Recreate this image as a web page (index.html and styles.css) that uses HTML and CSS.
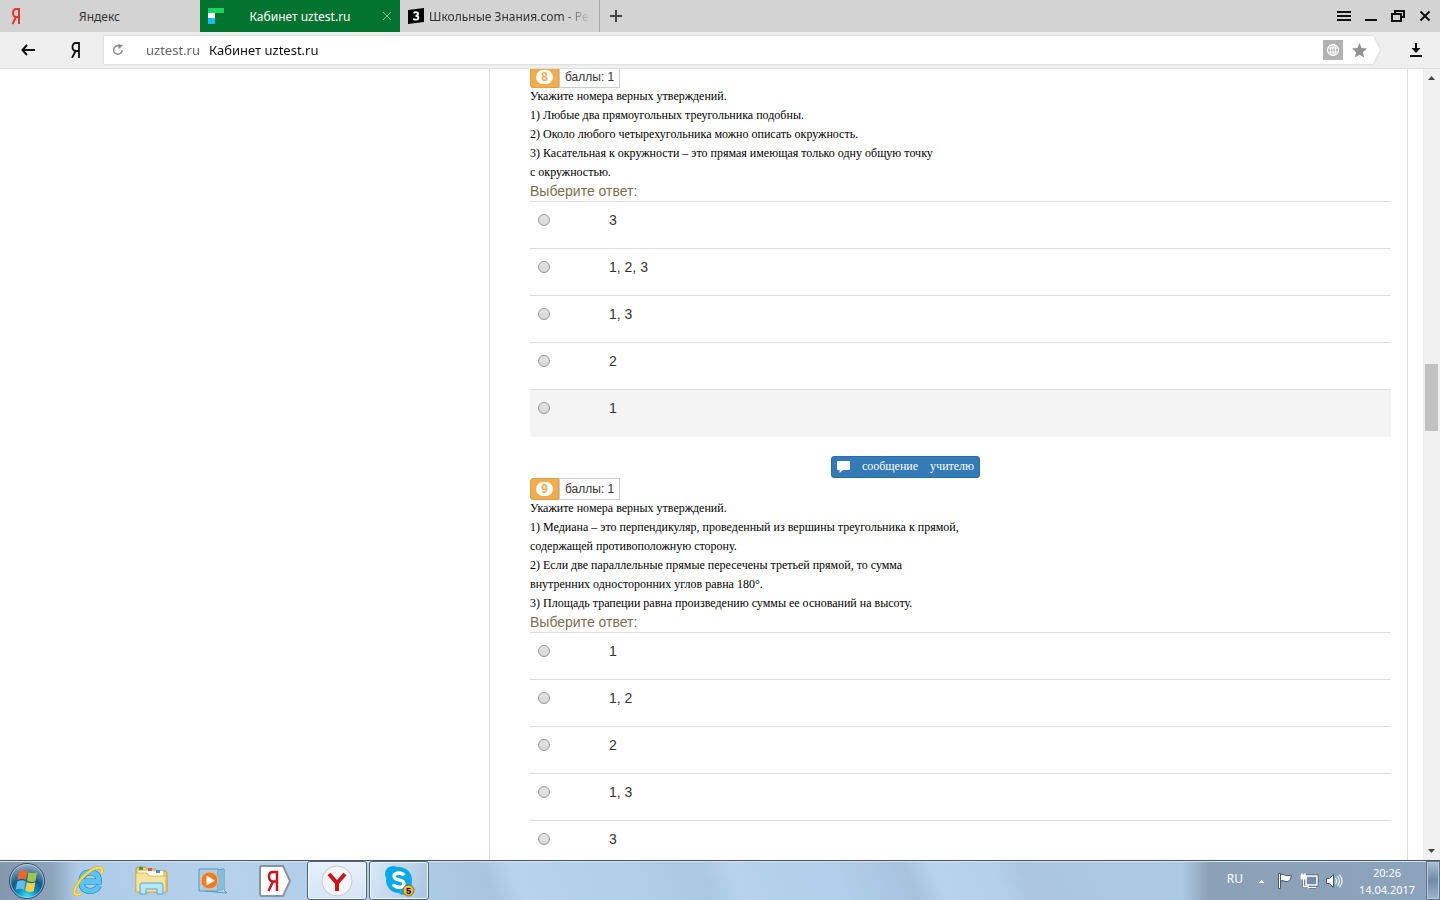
FILE: index.html
```
<!DOCTYPE html>
<html lang="ru">
<head>
    <meta charset="UTF-8">
    <meta name="viewport" content="width=device-width, initial-scale=1.0">
    <title>Кабинет uztest.ru</title>
    <link rel="stylesheet" href="styles.css">
</head>
<body>
    <header class="tabs">
        <button class="tab">
            <svg class="favicon" width="16" height="18" viewBox="0 0 16 18"><path d="M11 17V2H8.500Q5 2 5 6q0 4 3.500 4H11M8 10 4.500 17" fill="none" stroke="#e0392b" stroke-width="2"/></svg>
            <span class="tab-title">Яндекс</span>
        </button>
        <button class="tab active">
            <svg class="favicon" width="16" height="16" viewBox="0 0 16 16"><path d="M0 0h16v5H0z" fill="#19d463"/><path d="M0 5h7v5H0z" fill="#fff"/><path d="M0 10h7v6H0z" fill="#18bdf0"/></svg>
            <span class="tab-title">Кабинет uztest.ru</span>
            <svg class="tab-close" width="10" height="10" viewBox="0 0 10 10"><path d="M1 1l8 8M9 1l-8 8" stroke="#8dc0a0"/></svg>
        </button>
        <button class="tab long">
            <svg class="favicon" width="16" height="16" viewBox="0 0 16 16"><path d="M0 2 16 0v14L0 16z" fill="#000"/><path d="M5.500 5Q8 3.500 9.800 4.800 10.800 7.500 7.500 7.800 11.200 8 10.200 10.800 8.500 12.300 5.200 11.200" fill="none" stroke="#fff" stroke-width="1.800"/></svg>
            <span class="tab-title">Школьные Знания.com - Ре</span>
        </button>
        <button class="new-tab" aria-label="Новая вкладка">
            <svg width="12" height="12" viewBox="0 0 12 12"><path d="M6 0v12M0 6h12" stroke="#444" stroke-width="2"/></svg>
        </button>
        <div class="window-buttons">
            <button aria-label="Меню"><svg width="14" height="12" viewBox="0 0 14 12"><path d="M0 2h14M0 6h14M0 10h14" stroke="#111" stroke-width="2"/></svg></button>
            <button aria-label="Свернуть"><svg width="12" height="12" viewBox="0 0 12 12"><path d="M0 10h12" stroke="#111" stroke-width="2"/></svg></button>
            <button aria-label="Развернуть"><svg width="14" height="12" viewBox="0 0 14 12"><path d="M4 4V1h9v6h-3M1 4h9v7H1z" fill="none" stroke="#111" stroke-width="2"/></svg></button>
            <button aria-label="Закрыть"><svg width="12" height="12" viewBox="0 0 12 12"><path d="M1.500 1.500l9 9M10.500 1.500l-9 9" stroke="#111" stroke-width="2"/></svg></button>
        </div>
    </header>

    <nav class="toolbar">
        <button class="tool" aria-label="Назад"><svg width="14" height="12" viewBox="0 0 14 12"><path d="M14 6H2M6 1 1.500 6 6 11" fill="none" stroke="#111" stroke-width="2"/></svg></button>
        <button class="tool" aria-label="Яндекс"><svg width="10" height="16" viewBox="0 0 10 16"><path d="M8 9H5Q1.500 8.700 1.500 5 1.500 1 5 1h3v15M4.600 9 1 16" fill="none" stroke="#111" stroke-width="1.800"/></svg></button>
        <div class="address-shadow">
            <div class="address">
                <button class="reload" aria-label="Обновить"><svg width="12" height="12" viewBox="0 0 12 12"><path d="M10.200 6A4.300 4.300 0 1 1 6 1.700h2" fill="none" stroke="#888" stroke-width="1.400"/><path d="M6.500 0v5L11 1.500z" fill="#888"/></svg></button>
                <label class="domain" for="url">uztest.ru</label>
                <input class="url" id="url" type="text" value="Кабинет uztest.ru">
                <button aria-label="Перевести"><svg width="20" height="20" viewBox="0 0 20 20"><path d="M0 0h20v20H0z" fill="#b2b2b2"/><g fill="none" stroke="#fff" stroke-width="1.100"><circle cx="10" cy="10" r="5.500"/><ellipse cx="10" cy="10" rx="2.600" ry="5.500"/><path d="M5 8h10M5 12h10M10 4.500v11"/></g></svg></button>
                <button aria-label="В закладки"><svg width="15" height="15" viewBox="0 0 15 15"><path d="M7.500 0 9.600 5.100 15 5.600 10.900 9.200 12.200 14.600 7.500 11.700 2.800 14.600 4.100 9.200 0 5.600 5.400 5.100z" fill="#929292"/></svg></button>
            </div>
        </div>
        <button class="download" aria-label="Загрузки"><svg width="12" height="14" viewBox="0 0 12 14"><path d="M6 0v8M0 13h12" stroke="#111" stroke-width="2"/><path d="M1.500 5h9L6 10z" fill="#111"/></svg></button>
    </nav>

    <div class="viewport">
        <aside class="side"></aside>
        <main class="content">
            <section class="question">
                <div class="question-head"><span class="number"><b>8</b></span><span class="points">баллы: 1</span></div>
                <p class="question-text">
                    Укажите номера верных утверждений.<br>
                    1) Любые два прямоугольных треугольника подобны.<br>
                    2) Около любого четырехугольника можно описать окружность.<br>
                    3) Касательная к окружности – это прямая имеющая только одну общую точку<br>
                    с окружностью.
                </p>
                <div class="choose">Выберите ответ:</div>
                <table class="answers">
                    <tr><td><input type="radio" name="q8" id="q8a"></td><td><label for="q8a">3</label></td></tr>
                    <tr><td><input type="radio" name="q8" id="q8b"></td><td><label for="q8b">1, 2, 3</label></td></tr>
                    <tr><td><input type="radio" name="q8" id="q8c"></td><td><label for="q8c">1, 3</label></td></tr>
                    <tr><td><input type="radio" name="q8" id="q8d"></td><td><label for="q8d">2</label></td></tr>
                    <tr class="hovered"><td><input type="radio" name="q8" id="q8e"></td><td><label for="q8e">1</label></td></tr>
                </table>
                <div class="actions">
                    <button class="message">
                        <svg width="13" height="12" viewBox="0 0 13 12"><path d="M1 0h11q1 0 1 1v7q0 1-1 1H6l-3.500 3V9H1Q0 9 0 8V1q0-1 1-1z" fill="#fff"/></svg>
                        <span>сообщение</span><span>учителю</span>
                    </button>
                </div>
            </section>

            <section class="question">
                <div class="question-head"><span class="number"><b>9</b></span><span class="points">баллы: 1</span></div>
                <p class="question-text">
                    Укажите номера верных утверждений.<br>
                    1) Медиана – это перпендикуляр, проведенный из вершины треугольника к прямой,<br>
                    содержащей противоположную сторону.<br>
                    2) Если две параллельные прямые пересечены третьей прямой, то сумма<br>
                    внутренних односторонних углов равна 180°.<br>
                    3) Площадь трапеции равна произведению суммы ее оснований на высоту.
                </p>
                <div class="choose">Выберите ответ:</div>
                <table class="answers">
                    <tr><td><input type="radio" name="q9" id="q9a"></td><td><label for="q9a">1</label></td></tr>
                    <tr><td><input type="radio" name="q9" id="q9b"></td><td><label for="q9b">1, 2</label></td></tr>
                    <tr><td><input type="radio" name="q9" id="q9c"></td><td><label for="q9c">2</label></td></tr>
                    <tr><td><input type="radio" name="q9" id="q9d"></td><td><label for="q9d">1, 3</label></td></tr>
                    <tr><td><input type="radio" name="q9" id="q9e"></td><td><label for="q9e">3</label></td></tr>
                </table>
            </section>
        </main>
        <div class="scrollbar">
            <svg width="7" height="4" viewBox="0 0 7 4"><path d="M0 4 3.500 0 7 4z" fill="#444"/></svg>
            <div class="track"><div class="thumb"></div></div>
            <svg width="7" height="4" viewBox="0 0 7 4"><path d="M0 0 3.500 4 7 0z" fill="#444"/></svg>
        </div>
    </div>

    <footer class="taskbar">
        <button class="start" aria-label="Пуск">
            <svg width="38" height="38" viewBox="0 0 38 38">
                <defs>
                    <radialGradient id="orb" cx=".5" cy=".95" r=".95"><stop offset="0" stop-color="#3fe0f5"/><stop offset=".3" stop-color="#0c8fc0"/><stop offset=".55" stop-color="#175a86"/><stop offset="1" stop-color="#9db4c6"/></radialGradient>
                </defs>
                <circle cx="19" cy="19" r="17.500" fill="url(#orb)" stroke="#2f5068"/>
                <circle cx="19" cy="19" r="16.500" fill="none" stroke="#c4dbe8" stroke-opacity=".6"/>
                <path d="M11 9.500q4-2.500 8.500 0L18 18q-4-2.500-8.500 0z" fill="#ef642c"/>
                <path d="M20.500 10.200q4 2.300 8.500 0L27.500 19q-4.500 2.200-8.500-.5z" fill="#9bc84c"/>
                <path d="M9.200 19.500q4.500-2.500 8.500 0L16.200 28q-4-2.300-8.500 0z" fill="#65bce9"/>
                <path d="M18.800 20q4 2.500 8.500.3L25.800 29q-4.500 2-8.500-.5z" fill="#fbcf48"/>
            </svg>
        </button>
        <button class="app" aria-label="Internet Explorer">
            <svg width="34" height="34" viewBox="0 0 34 34"><path d="M27 21.500Q24.500 27 18 27 9.500 26.500 9.500 18 9.500 8.500 18 8.500q9 0 9 9H12" fill="none" stroke="#247fb9" stroke-width="6"/><path d="M27 21.500Q24.500 27 18 27 9.500 26.500 9.500 18 9.500 8.500 18 8.500q9 0 9 9H12" fill="none" stroke="#5bc4ef" stroke-width="4.800"/><path d="M29 10Q32 4 27.500 3.500 20 3.500 10 14-1 28 4 30.500q2 .8 5-1" fill="none" stroke="#d7a51b" stroke-width="3"/><path d="M29 10Q32 4 27.500 3.500 20 3.500 10 14-1 28 4 30.500q2 .8 5-1" fill="none" stroke="#f9df5a" stroke-width="2"/></svg>
        </button>
        <button class="app" aria-label="Проводник">
            <svg width="34" height="32" viewBox="0 0 34 32"><path d="M2 4q0-2 2-2h7l2 2h8l2 2h8q2 0 2 2v19H2z" fill="#e9cd72" stroke="#c39c3c"/><path d="M4 6h25v5H4z" fill="#fff"/><path d="M5 2h4v3H5z" fill="#3d9b4b"/><path d="M14 3h4v3h-4z" fill="#cf5c3d"/><path d="M22 5h4v3h-4z" fill="#4594c9"/><path d="M2 8h11l2 3h17v16H2z" fill="#f6e49c" stroke="#d8b75a"/><path d="M6 29V20q0-2 2-2h19q2 0 2 2v9h-6v-5H12v5z" fill="#b9e3f6" stroke="#57a8ce"/></svg>
        </button>
        <button class="app" aria-label="Проигрыватель">
            <svg width="30" height="28" viewBox="0 0 30 28"><path d="M7 4 26 2v21l3 3-22-2" fill="#c3e0ef" stroke="#5299bb"/><path d="M22 3v21M24 3v21" stroke="#5299bb"/><path d="M1 2h19v22H1z" fill="#a9cfe6" stroke="#5299bb"/><circle cx="11.500" cy="13.500" r="8.500" fill="#ef7b27" stroke="#f8bb83"/><path d="M8.500 8.500v10l8.500-5z" fill="#fff"/></svg>
        </button>
        <button class="app" aria-label="Яндекс">
            <svg width="32" height="32" viewBox="0 0 32 32"><path d="M3 1h21l7 15-7 15H3q-2 0-2-2V3q0-2 2-2z" fill="#fff" stroke="#8793a0" stroke-width="2"/><path d="M17 16.500h-3q-4-.5-4-5 0-4.500 4-4.500h4v19M14 16.500 9.500 26" fill="none" stroke="#c8141b" stroke-width="2.500"/></svg>
        </button>
        <button class="app opened" aria-label="Яндекс.Браузер">
            <svg width="32" height="32" viewBox="0 0 32 32"><circle cx="16" cy="16" r="15" fill="#f5f5f6" stroke="#c7cbd1"/><path d="M8 9l8 9 8-9M16 17v9" fill="none" stroke="#c9171e" stroke-width="4"/></svg>
        </button>
        <button class="app opened dim" aria-label="Skype">
            <svg width="32" height="32" viewBox="0 0 32 32"><circle cx="10" cy="9" r="8" fill="#08a9e5"/><circle cx="16" cy="15" r="13" fill="#08a9e5"/><circle cx="21" cy="22" r="8" fill="#08a9e5"/><path d="M21 10.500Q19.500 8 15.500 8 11 8.300 11 11.200q0 2.600 5 3.700 5 1.100 5 4 0 3.200-5 3.300-4.500 0-5.500-3" fill="none" stroke="#fff" stroke-width="3.400"/><circle cx="25.500" cy="25.500" r="5.500" fill="#f5b836" stroke="#7f6a38"/><text x="25.500" y="29" text-anchor="middle" class="counter">5</text></svg>
        </button>
        <div class="tray">
            <span class="lang">RU</span>
            <button aria-label="Скрытые значки"><svg width="20" height="16" viewBox="0 0 20 16"><path d="M5.500 10.500 9.500 6.500l4 4z" fill="#fff" stroke="#627991" stroke-width=".5"/></svg></button>
            <button aria-label="Центр поддержки"><svg width="20" height="18" viewBox="0 0 20 18"><path d="M2.500 1.500h2v15h-2zM4.500 2.500q3-1 5 1h6q-.5 5-3.500 6H9q-1.500-1.500-4.500-.5z" fill="#fff" stroke="#46586c"/></svg></button>
            <button aria-label="Сеть"><svg width="20" height="18" viewBox="0 0 20 18"><path d="M6 4h11v9H6zM9 15.500h7M3.500 5v9h4" fill="none" stroke="#46586c" stroke-width="3"/><path d="M6 4h11v9H6z" fill="#748ca5" stroke="#fff" stroke-width="1.500"/><path d="M8 15.500h8M3.500 7v7.500h5" fill="none" stroke="#fff" stroke-width="1.500"/><path d="M1 3h5v4H1zM2 1v2M5 1v2" fill="#fff" stroke="#fff"/></svg></button>
            <button aria-label="Громкость"><svg width="20" height="18" viewBox="0 0 20 18"><path d="M2.500 6.500h3l4-4v13l-4-4h-3z" fill="#fff" stroke="#46586c"/><path d="M11.500 6q2 3 0 6M13.500 4q3.500 5 0 10M15.500 2.500q5 6.500 0 13" fill="none" stroke="#f1f5f9" stroke-width="1.200"/></svg></button>
            <time class="clock">20:26<br>14.04.2017</time>
        </div>
        <button class="show-desktop" aria-label="Свернуть все окна"></button>
    </footer>
</body>
</html>
```
FILE: styles.css
```
* {
    box-sizing: border-box;
}
body {
    margin: 0;
    height: 100vh;
    display: flex;
    flex-direction: column;
    overflow: hidden;
    font-family: "Liberation Sans", Arial, sans-serif;
    font-size: 14px;
    color: #333;
    background-color: #fff;
}
button {
    display: flex;
    align-items: center;
    justify-content: center;
    padding: 0;
    border: none;
    background: none;
    font: inherit;
    color: inherit;
    cursor: pointer;
}
svg {
    display: block;
    flex: none;
}

/* browser tabs */
.tabs {
    display: flex;
    height: 32px;
    background-color: #d3d3d3;
    font-family: "Noto Sans", sans-serif;
    font-size: 12px;
}
.tab {
    width: 200px;
    padding: 0 8px;
    gap: 5px;
}
.tab-title {
    flex: 1;
    white-space: nowrap;
    text-align: center;
    padding-right: 22px;
}
.tab.active {
    background-color: #03742f;
    color: #fff;
}
.active .tab-title {
    padding-right: 6px;
}
.tab.long {
    border-right: 1px solid #aaa;
}
.long .tab-title {
    padding: 0;
    text-align: left;
    -webkit-mask-image: linear-gradient(to right, #000 82%, transparent);
    mask-image: linear-gradient(to right, #000 82%, transparent);
}
.new-tab {
    width: 32px;
}
.window-buttons {
    display: flex;
    gap: 14px;
    margin-left: auto;
    padding-right: 9px;
}

/* address line */
.toolbar {
    display: flex;
    align-items: center;
    height: 37px;
    background-color: #efefef;
    border-bottom: 1px solid #dcdee0;
    font-family: "Noto Sans", sans-serif;
    font-size: 13px;
}
.tool {
    width: 48px;
    height: 32px;
}
.tool:first-child {
    margin-left: 4px;
}
.address-shadow {
    flex: 1;
    margin-left: 4px;
    filter: drop-shadow(0 0 1px #c4c4c4);
}
.address {
    display: flex;
    align-items: center;
    gap: 9px;
    height: 28px;
    padding: 0 13px 0 8px;
    background-color: #fff;
    clip-path: polygon(0 0, calc(100% - 7px) 0, 100% 50%, calc(100% - 7px) 100%, 0 100%);
}
.domain {
    margin-left: 13px;
    color: #666;
}
.url {
    flex: 1;
    padding: 0;
    border: none;
    outline: none;
    font: inherit;
    color: #111;
}
.download {
    width: 60px;
    height: 32px;
    padding-left: 12px;
}

/* page */
.viewport {
    display: flex;
    flex: 1;
    min-height: 0;
    overflow: hidden;
}
.side {
    width: 489px;
}
.content {
    flex: 1;
    margin-right: 15px;
    padding: 0 16px 0 40px;
    border-left: 1px solid #ddd;
    border-right: 1px solid #ddd;
}
.question:first-child {
    margin-top: -3px;
}
.question-head {
    display: flex;
    height: 21px;
    font-size: 12px;
    line-height: 20px;
}
.number {
    display: flex;
    align-items: center;
    justify-content: center;
    width: 29px;
    height: 22px;
    background-color: #f0ad4e;
    border: 1px solid #e0a045;
    border-radius: 3px 0 0 3px;
}
.number b {
    width: 17px;
    height: 14px;
    border-radius: 7px;
    background-color: #fff;
    color: #f0ad4e;
    font-size: 12px;
    line-height: 14px;
    text-align: center;
}
.points {
    height: 22px;
    padding: 0 5px;
    border: 1px solid #ccc;
}
.question-text {
    margin: 0;
    font-family: "Liberation Serif", "Times New Roman", serif;
    font-size: 12px;
    line-height: 19px;
    color: #000;
}
.choose {
    line-height: 19px;
    color: #7d6d50;
}
.answers {
    width: 100%;
    border-collapse: collapse;
}
.answers td {
    height: 47px;
    padding: 8px;
    border-top: 1px solid #ddd;
    line-height: 20px;
    vertical-align: top;
}
.answers td:first-child {
    width: 71px;
}
.answers input {
    display: block;
    appearance: none;
    width: 12px;
    height: 12px;
    margin: 4px 0;
    border: 1px solid #999;
    border-radius: 50%;
    background: linear-gradient(#e4e4e4, #d8d8d8);
}
.answers input:checked {
    background: #555;
}
.hovered {
    background-color: #f4f4f4;
}
.actions {
    display: flex;
    justify-content: center;
    padding-top: 19px;
    padding-right: 110px;
}
.message {
    gap: 12px;
    height: 22px;
    padding: 0 5px;
    border: 1px solid #2e6da4;
    border-radius: 3px;
    background-color: #337ab7;
    color: #fff;
    font-family: "Liberation Serif", "Times New Roman", serif;
    font-size: 12px;
}

.scrollbar {
    display: flex;
    flex-direction: column;
    align-items: center;
    width: 17px;
    padding: 7px 0;
    background-color: #f0f0f0;
}
.track {
    flex: 1;
    width: 13px;
}
.thumb {
    height: 67px;
    margin-top: 284px;
    background-color: #c1c1c1;
}

/* taskbar */
.taskbar {
    display: flex;
    gap: 2px;
    height: 40px;
    border-top: 1px solid #44566a;
    box-shadow: inset 0 1px #d7e5f2;
    background:
        linear-gradient(to right, #8397ad 0, #8ea4bb 52px, transparent 78px, transparent 82%, #8ba1b7 84%, #8ba3bc 100%),
        linear-gradient(68deg, #aecbe7 6%, #b5d1ec 17%, #aecbe5 29%, #a9c4df 34%, #b6d2ed 36%, #b3d0eb 43%, #abc8e3 49%, #b6d2ed 51%, #b1cfea 58%, #a8c2de 63%, #b6d2ed 65%, #b5d0eb 69%, #abc5e0 71%, #adcae5 82%);
}
.start {
    width: 57px;
    padding-right: 3px;
}
.app {
    width: 60px;
}
.opened {
    border: 1px solid #53677c;
    border-radius: 3px;
    box-shadow: inset 0 0 0 1px #edf5fc;
    background: linear-gradient(#e8f1fa, #d4e5f5);
}
.opened.dim {
    background: linear-gradient(110deg, #d9e8f6, #a8c5e1);
}
.counter {
    font-size: 9px;
    font-weight: bold;
}
.tray {
    display: flex;
    align-items: center;
    gap: 4px;
    margin-left: auto;
    color: #fff;
    font-family: "Noto Sans", sans-serif;
    font-size: 12px;
}
.lang {
    padding: 0 5px 4px 0;
}
.clock {
    width: 78px;
    font-size: 11px;
    line-height: 17px;
    text-align: center;
}
.show-desktop {
    width: 14px;
    margin-left: -2px;
    border: 1px solid #60788f;
    box-shadow: inset 0 0 0 1px #b5c7d8;
    background: linear-gradient(#a9bed2, #6e8aa7 50%, #9db5cc);
}
```
